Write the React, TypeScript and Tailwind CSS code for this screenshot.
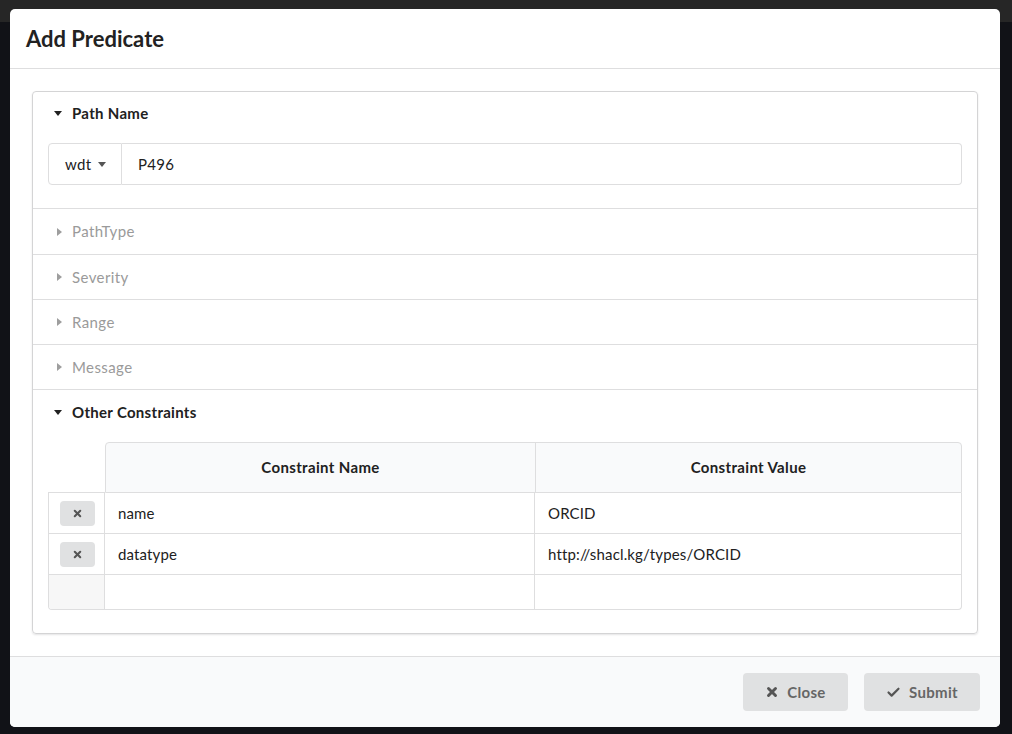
import { Check, X } from "lucide-react";

const font = { fontFamily: "Lato, 'Open Sans', sans-serif" };

function CaretDown({ className = "" }: { className?: string }) {
  return (
    <svg viewBox="0 0 8 5" className={"h-[5px] w-[8px] " + className}>
      <path d="M0 0h8L4 5z" fill="currentColor" />
    </svg>
  );
}

function CaretRight() {
  return (
    <svg viewBox="0 0 5 8" className="h-[8px] w-[5px] text-[#9e9e9e]">
      <path d="M0 0v8l5-4z" fill="currentColor" />
    </svg>
  );
}

function Collapsed({ label, first }: { label: string; first?: boolean }) {
  return (
    <div
      className={
        "flex items-center border-t border-[#dededf] pl-[24px] text-[15px] tracking-[0.4px] text-[#9a9a9a] " +
        (first ? "h-[46px]" : "h-[45px]")
      }
    >
      <CaretRight />
      <span className="ml-[10px]">{label}</span>
    </div>
  );
}

const rows = [
  { name: "name", value: "ORCID" },
  { name: "datatype", value: "http://shacl.kg/types/ORCID" },
];

export default function App() {
  return (
    <div className="relative h-[734px] w-full overflow-hidden bg-[#111217]" style={font}>
      <div className="absolute left-0 right-0 top-0 h-[22px] bg-[#262626]" />
      <div className="relative ml-[10px] mt-[9px] flex h-[718px] w-[990px] flex-col overflow-hidden rounded-[5px] bg-white">
        <div className="flex h-[60px] items-center border-b border-[#dededf] pl-[16px] text-[22px] font-bold text-[#222]">
          Add Predicate
        </div>

        <div className="px-[22px] pt-[22px] pb-[22px]">
          <div className="rounded-[4px] border border-[#d4d4d5] shadow-[0_1px_2px_0_rgba(34,36,38,0.12)]">
            <div className="flex h-[43px] items-center pl-[21px] text-[15px] font-bold tracking-[0.3px] text-[#212121]">
              <CaretDown className="text-[#212121]" />
              <span className="ml-[10px]">Path Name</span>
            </div>
            <div className="flex px-[15px] pt-[8px] pb-[23px] text-[15px] tracking-[0.3px] text-[#212121]">
              <div className="flex h-[42px] w-[74px] items-center rounded-l-[4px] border border-[#dededf] pl-[16px]">
                <span>wdt</span>
                <CaretDown className="ml-[7px] h-[4px] w-[7px] text-[#555]" />
              </div>
              <div className="flex h-[42px] flex-1 items-center rounded-r-[4px] border border-l-0 border-[#dededf] pl-[16px]">
                P496
              </div>
            </div>

            <Collapsed label="PathType" first />
            <Collapsed label="Severity" />
            <Collapsed label="Range" />
            <Collapsed label="Message" />

            <div className="flex h-[46px] items-center border-t border-[#dededf] pl-[21px] text-[15px] font-bold tracking-[0.3px] text-[#212121]">
              <CaretDown className="text-[#212121]" />
              <span className="ml-[10px]">Other Constraints</span>
            </div>
            <div className="px-[15px] pt-[7px] pb-[23px]">
              <div className="text-[15px] tracking-[0.15px] text-[#212121]">
                <div className="flex h-[51px]">
                  <div className="w-[57px] border-b border-[#dededf]" />
                  <div className="flex flex-1 overflow-hidden rounded-tr-[4px] rounded-tl-[4px] border border-b border-[#dededf] bg-[#f9fafb] font-bold tracking-[0.35px]">
                    <div className="flex w-[430px] items-center justify-center border-r border-[#dededf]">Constraint Name</div>
                    <div className="flex flex-1 items-center justify-center">Constraint Value</div>
                  </div>
                </div>
                <div className="overflow-hidden rounded-b-[4px] border border-t-0 border-[#dededf]">
                  {rows.map((r) => (
                    <div key={r.name} className="flex h-[41px] border-b border-[#dededf]">
                      <div className="flex w-[56px] items-center justify-center border-r border-[#dededf]">
                        <div className="ml-[2px] flex h-[25px] w-[35px] items-center justify-center rounded-[4px] bg-[#e0e1e2]">
                          <X size={11} strokeWidth={4.5} className="text-[#555]" />
                        </div>
                      </div>
                      <div className="flex w-[430px] items-center border-r border-[#dededf] pl-[13px]">{r.name}</div>
                      <div className="flex flex-1 items-center pl-[13px]">{r.value}</div>
                    </div>
                  ))}
                  <div className="flex h-[34px]">
                    <div className="w-[56px] border-r border-[#dededf] bg-[#f7f7f7]" />
                    <div className="w-[430px] border-r border-[#dededf]" />
                    <div className="flex-1" />
                  </div>
                </div>
              </div>
            </div>
          </div>
        </div>

        <div className="flex flex-1 items-center justify-end gap-[16px] border-t border-[#dededf] bg-[#f9fafb] pr-[20px] text-[15px] font-bold tracking-[0.3px] text-[#666]">
          <div className="flex h-[38px] w-[105px] items-center justify-center gap-[8px] rounded-[4px] bg-[#e0e1e2]">
            <X size={14} strokeWidth={5} className="text-[#555]" />
            <span>Close</span>
          </div>
          <div className="flex h-[38px] w-[116px] items-center justify-center gap-[8px] rounded-[4px] bg-[#e0e1e2]">
            <Check size={15} strokeWidth={3.5} className="text-[#555]" />
            <span>Submit</span>
          </div>
        </div>
      </div>
    </div>
  );
}
